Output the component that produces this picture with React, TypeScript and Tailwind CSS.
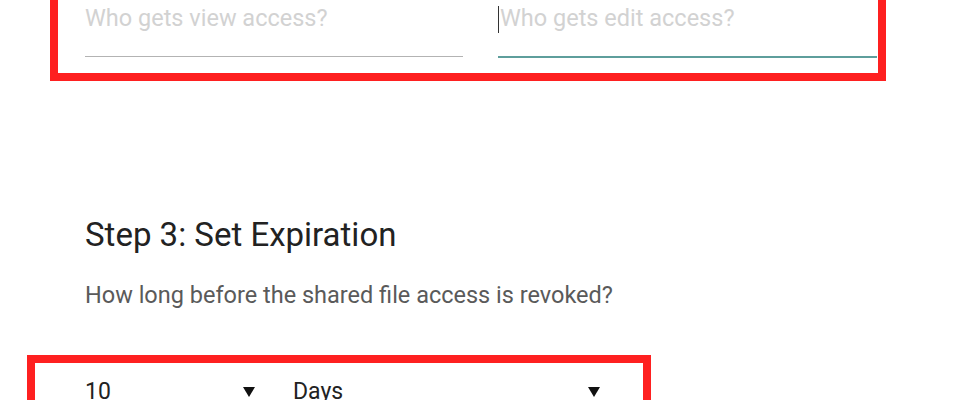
import React from "react";

const font = { fontFamily: "Roboto, 'Noto Sans', Arial, sans-serif" };

const Caret = () => (
  <svg width="12" height="10" viewBox="0 0 12 10" className="shrink-0">
    <polygon points="0,0 12,0 6,10" fill="#111" />
  </svg>
);

const Dropdown = ({ value, width }: { value: string; width: string }) => (
  <div className={`${width} flex items-center justify-between pr-[3px]`}>
    <span className="text-[23px] leading-[28px] text-[#222]">{value}</span>
    <Caret />
  </div>
);

export default function App() {
  return (
    <div className="w-[978px] h-[400px] overflow-hidden bg-white" style={font}>
      {/* step 2 access inputs, outlined */}
      <div className="-mt-[20px] ml-[50px] w-[836px] border-8 border-[#fe2020] pt-[16px] pb-[15px] pl-[27px] pr-[1px] flex items-start gap-[35px]">
        <div className="w-[378px] border-b border-[#b3b3b3] pb-[23px]">
          <input
            className="w-full h-[28px] text-[23.5px] leading-[28px] outline-none placeholder:text-[#d2d2d2]"
            placeholder="Who gets view access?"
          />
        </div>
        <div className="relative w-[379px] border-b-2 border-[#5e9e9c] pb-[23px]">
          <span className="absolute left-0 top-[2px] w-px h-[27px] bg-[#333]" />
          <input
            className="w-full h-[28px] pl-[2px] text-[23.5px] leading-[28px] outline-none placeholder:text-[#d2d2d2]"
            placeholder="Who gets edit access?"
          />
        </div>
      </div>

      <div className="pl-[85px] mt-[134px]">
        <h2 className="text-[33px] leading-[40px] text-[#222]">Step 3: Set Expiration</h2>
        <p className="mt-[26px] text-[23.5px] leading-[28px] text-[#5a5a5a]">
          How long before the shared file access is revoked?
        </p>
      </div>

      <div className="mt-[46px] ml-[27px] w-[624px] border-8 border-[#fe2020] pt-[15px] pb-[20px] pl-[50px] flex gap-[35px]">
        <Dropdown value="10" width="w-[173px]" />
        <Dropdown value="Days" width="w-[310px]" />
      </div>
    </div>
  );
}
